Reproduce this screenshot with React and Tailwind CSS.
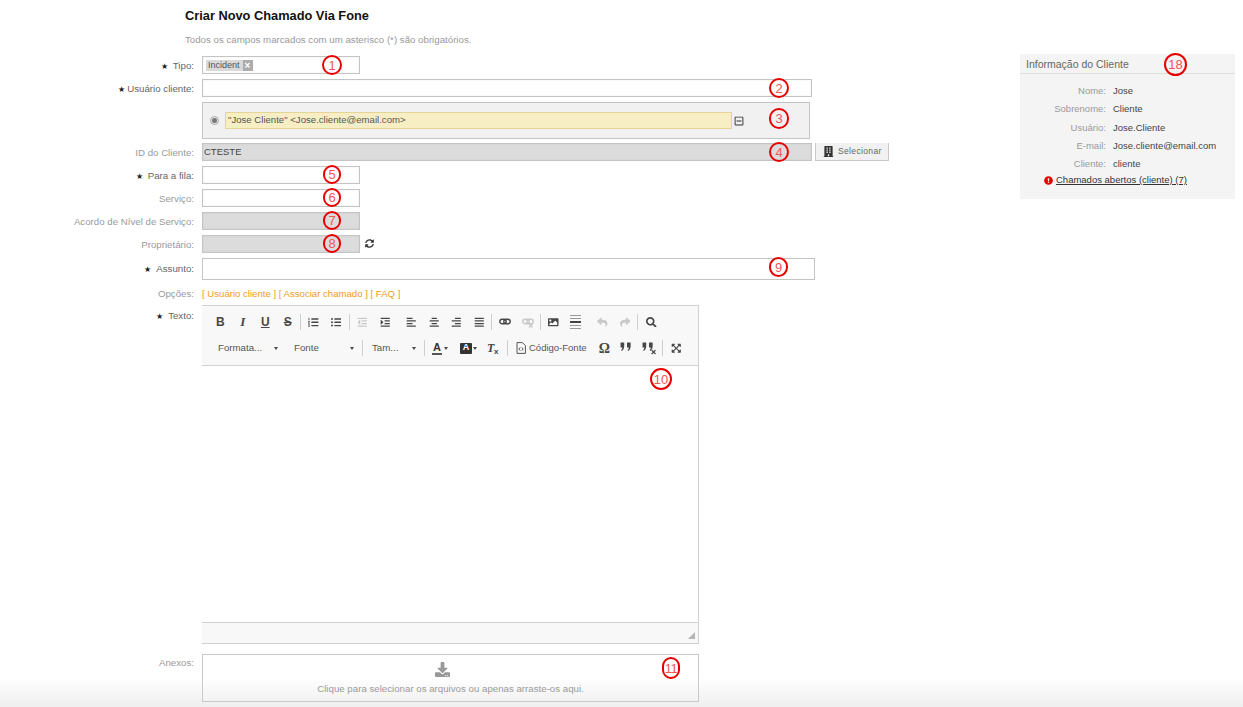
import {
  FaListOl, FaListUl, FaOutdent, FaIndent, FaAlignLeft, FaAlignCenter, FaAlignRight, FaAlignJustify,
  FaImage, FaReply, FaShare, FaSearch, FaExpandArrowsAlt, FaSyncAlt,
  FaBuilding, FaDownload, FaExclamationCircle, FaRegMinusSquare,
} from 'react-icons/fa';

const Mark = ({ n, className = '' }) => (
  <span className={`absolute flex items-center justify-center rounded-full border-2 border-[#e80000] text-[13px] leading-none text-[#f25555] ${className}`}>
    {n}
  </span>
);

const Label = ({ text, required, tight, className = 'pt-[4px]' }) => (
  <div className={`w-[194px] shrink-0 text-right text-[9.7px] leading-[12px] text-[#9a9a9a] ${className}`}>
    {required && <span className={`text-[8px] text-[#222] ${tight ? 'mr-[2px]' : 'mr-[5px]'}`}>★</span>}
    <span className={required ? 'text-[#666]' : ''}>{text}:</span>
  </div>
);

const Row = ({ label, required, tight, labelClass, className = '', children }) => (
  <div className={`flex gap-2 ${className}`}>
    <Label text={label} required={required} tight={tight} className={labelClass} />
    {children}
  </div>
);

const boxClass = 'relative h-[18px] border border-[#c4c4c4] shadow-[inset_0_0_2px_rgba(0,0,0,0.08)]';

const Btn = ({ children, faded }) => (
  <span className={`flex h-[16px] w-[22.5px] shrink-0 items-center justify-center text-[10.5px] ${faded ? 'text-[#c9c9c9]' : 'text-[#474747]'}`}>
    {children}
  </span>
);

const Sep = ({ className = '' }) => <span className={`h-[16px] w-px shrink-0 bg-[#cfcfcf] ${className}`} />;

const Caret = ({ className = '' }) => (
  <span className={`h-0 w-0 shrink-0 border-x-[2.5px] border-t-[3px] border-x-transparent border-t-[#474747] ${className}`} />
);

const Combo = ({ text, width, caretLeft }) => (
  <span className={`relative flex h-[16px] shrink-0 items-center text-[9.7px] text-[#555] ${width}`}>
    {text}
    <Caret className={`absolute top-[7px] ${caretLeft}`} />
  </span>
);

const LinkIcon = ({ cross }) => (
  <svg width="12" height="11" viewBox="0 0 12 11" fill="none" stroke="currentColor">
    <rect x="0.8" y="2.2" width="6.4" height="4.6" rx="2.3" strokeWidth="1.4" />
    <rect x="4.8" y="2.2" width="6.4" height="4.6" rx="2.3" strokeWidth="1.4" />
    {cross && <path d="M7 7l3.5 3.5M10.5 7L7 10.5" strokeWidth="1.3" />}
  </svg>
);

const SourceIcon = () => (
  <svg width="10" height="12" viewBox="0 0 10 12" fill="none" stroke="#444" className="shrink-0">
    <path d="M1 .6h5.4L9.4 3.6v7.8H1z" strokeWidth="0.9" />
    <path d="M4.2 5.4L2.9 7l1.3 1.6M5.8 5.4L7.1 7 5.8 8.6" strokeWidth="0.9" />
  </svg>
);

const QuoteIcon = ({ cross }) => (
  <svg width="16" height="14" viewBox="0 0 14 13" fill="#474747" stroke="none">
    <path d="M1 1.5h3.4v3.4c0 2.2-1 3.6-2.4 4.3l-.4-.8c.7-.6 1-1.3 1-2.4H1z" />
    <path d="M7 1.5h3.4v3.4c0 2.2-1 3.6-2.4 4.3l-.4-.8c.7-.6 1-1.3 1-2.4H7z" />
    {cross && <path d="M9.5 8.5l3.5 3.5M13 8.5L9.5 12" stroke="#474747" strokeWidth="1.2" />}
  </svg>
);

const InfoRow = ({ k, v, className = '' }) => (
  <div className={`flex gap-[7px] text-[9.5px] leading-[12px] ${className}`}>
    <span className="w-[86px] text-right text-[#9a9a9a]">{k}:</span>
    <span className="text-[#444]">{v}</span>
  </div>
);

const App = () => (
  <div className="h-[707px] w-[1243px] overflow-hidden bg-[linear-gradient(to_bottom,#ffffff_calc(100%-30px),#efefef)] font-['Liberation_Sans',Arial,sans-serif]">
    <div className="flex">
      <div className="w-[1020px] shrink-0">
        <h1 className="pl-[185px] pt-[9px] text-[12.8px] font-bold leading-[14px] text-[#111]">Criar Novo Chamado Via Fone</h1>
        <p className="mt-[11px] pl-[185px] text-[9.7px] leading-[12px] text-[#9a9a9a]">
          Todos os campos marcados com um asterisco (*) são obrigatórios.
        </p>

        <Row label="Tipo" required className="mt-[10px]">
          <div className={`${boxClass} w-[158px] bg-white`}>
            <span className="absolute left-[3px] top-[3px] flex h-[11px] items-center bg-[#d9d9d9] text-[9px] text-[#555]">
              <span className="px-[2px]">Incident</span>
              <span className="ml-[1px] flex h-[11px] w-[10px] items-center justify-center bg-[#ababab] text-[10px] font-bold leading-none text-white">×</span>
            </span>
            <Mark n="1" className="left-[119px] top-[-2px] h-[20px] w-[20px]" />
          </div>
        </Row>

        <Row label="Usuário cliente" required tight className="mt-[5px]">
          <div className={`${boxClass} w-[610px] bg-white`}>
            <Mark n="2" className="left-[566px] top-[-2px] h-[20px] w-[20px]" />
          </div>
        </Row>

        <div className="relative ml-[202px] mt-[5px] flex h-[37px] w-[608px] items-center border border-[#c4c4c4] bg-[#f1f1f1] pl-[7px]">
          <span className="flex h-[9px] w-[9px] items-center justify-center rounded-full border border-[#aaa] bg-[#e5e5e5]">
            <span className="h-[5px] w-[5px] rounded-full bg-[#777]" />
          </span>
          <div className="ml-[6px] flex h-[17px] w-[507px] items-center border border-[#e5d49a] bg-[#f7efc3] pl-[2px] text-[9.6px] text-[#555]">
            "Jose Cliente" &lt;Jose.cliente@email.com&gt;
          </div>
          <FaRegMinusSquare className="ml-[2px] text-[10px] text-[#333]" />
          <Mark n="3" className="left-[566px] top-[5px] h-[21px] w-[20px]" />
        </div>

        <Row label="ID do Cliente" className="mt-[4px]">
          <div className={`${boxClass} flex w-[610px] items-center bg-[#dcdcdc] pl-[1px] text-[9.5px] text-[#444]`}>
            CTESTE
            <Mark n="4" className="left-[566px] top-[-2px] h-[20px] w-[20px]" />
          </div>
          <div className="ml-[-5px] flex h-[18px] w-[74px] items-center gap-[4px] border-x border-b border-[#c9c9c9] bg-[#f1f1f1] pl-[7px] text-[8.5px] tracking-[0.35px] text-[#666]">
            <FaBuilding className="text-[11px] text-[#333]" />
            Selecionar
          </div>
        </Row>

        <Row label="Para a fila" required className="mt-[5px]">
          <div className={`${boxClass} w-[158px] bg-white`}>
            <Mark n="5" className="left-[120px] top-[-2px] h-[19px] w-[18px]" />
          </div>
        </Row>

        <Row label="Serviço" className="mt-[5px]">
          <div className={`${boxClass} w-[158px] bg-white`}>
            <Mark n="6" className="left-[120px] top-[-2px] h-[19px] w-[18px]" />
          </div>
        </Row>

        <Row label="Acordo de Nível de Serviço" className="mt-[5px]">
          <div className={`${boxClass} w-[158px] bg-[#dcdcdc]`}>
            <Mark n="7" className="left-[120px] top-[-2px] h-[19px] w-[18px]" />
          </div>
        </Row>

        <Row label="Proprietário" className="mt-[5px]">
          <div className={`${boxClass} w-[158px] bg-[#dcdcdc]`}>
            <Mark n="8" className="left-[120px] top-[-2px] h-[19px] w-[18px]" />
          </div>
          <FaSyncAlt className="ml-[-3px] mt-[4px] text-[9px] text-[#333]" />
        </Row>

        <Row label="Assunto" required labelClass="pt-[5px]" className="mt-[5px]">
          <div className="relative h-[22px] w-[613px] border border-[#c4c4c4] bg-white">
            <Mark n="9" className="left-[566px] top-[-2px] h-[20px] w-[19px]" />
          </div>
        </Row>

        <Row label="Opções" className="mt-[4px]">
          <div className="pt-[4px] text-[9.6px] leading-[12px] text-[#f39c12]">
            [ Usuário cliente ] [ Associar chamado ] [ FAQ ]
          </div>
        </Row>

        <Row label="Texto" required labelClass="pt-[5px]" className="mt-[5px]">
          <div className="relative flex h-[339px] w-[497px] flex-col border-b border-r border-t border-[#d1d1d1] bg-white">
            <div className="h-[60px] shrink-0 border-b border-[#d1d1d1] bg-[#f8f8f8]">
              <div className="flex items-center pl-[7px] pt-[8px]">
                <Btn><span className="text-[12px] font-bold">B</span></Btn>
                <Btn><span className="font-['Liberation_Serif',serif] text-[13px] font-bold italic">I</span></Btn>
                <Btn><span className="text-[12px] font-bold underline">U</span></Btn>
                <Btn><span className="text-[12px] font-bold line-through">S</span></Btn>
                <Sep className="mx-[1px]" />
                <Btn><FaListOl /></Btn>
                <Btn><FaListUl /></Btn>
                <Sep className="ml-[2px] mr-[1px]" />
                <Btn faded><FaOutdent /></Btn>
                <Btn><FaIndent /></Btn>
                <span className="w-[4px] shrink-0" />
                <Btn><FaAlignLeft /></Btn>
                <Btn><FaAlignCenter /></Btn>
                <Btn><FaAlignRight /></Btn>
                <Btn><FaAlignJustify /></Btn>
                <Sep className="ml-[1px] mr-[2px]" />
                <Btn><LinkIcon /></Btn>
                <Btn faded><LinkIcon cross /></Btn>
                <Sep className="mx-[1px]" />
                <Btn><FaImage /></Btn>
                <Btn>
                  <span className="flex w-[11px] flex-col gap-[2px]">
                    <span className="h-px bg-[#999]" />
                    <span className="h-px bg-[#999]" />
                    <span className="h-[2px] bg-[#444]" />
                    <span className="h-px bg-[#999]" />
                    <span className="h-px bg-[#999]" />
                  </span>
                </Btn>
                <span className="w-[4px] shrink-0" />
                <Btn faded><FaReply /></Btn>
                <Btn faded><FaShare /></Btn>
                <Sep className="ml-[1px] mr-[2px]" />
                <Btn><FaSearch /></Btn>
              </div>
              <div className="mt-[10px] flex items-center pl-[16px]">
                <Combo text="Formata..." width="w-[76px]" caretLeft="left-[56px]" />
                <Combo text="Fonte" width="w-[68px]" caretLeft="left-[56px]" />
                <Sep className="mr-[9px]" />
                <Combo text="Tam..." width="w-[52px]" caretLeft="left-[40px]" />
                <Sep className="mr-[7px]" />
                <span className="flex w-[28px] shrink-0 items-center">
                  <span className="border-b-2 border-[#555] px-[1px] text-[11px] font-bold leading-[12px] text-[#333]">A</span>
                  <Caret className="ml-[2px]" />
                </span>
                <span className="flex w-[27px] shrink-0 items-center">
                  <span className="flex h-[11px] w-[12px] items-center justify-center rounded-[1px] bg-[#333] text-[9px] font-bold text-white">A</span>
                  <Caret className="ml-[1px]" />
                </span>
                <span className="relative w-[20px] shrink-0 font-['Liberation_Serif',serif] text-[12px] font-bold italic leading-[12px] text-[#444]">
                  T<span className="absolute left-[7px] top-[4px] font-['Liberation_Sans',sans-serif] text-[8px] not-italic">x</span>
                </span>
                <Sep className="mr-[8px]" />
                <SourceIcon />
                <span className="ml-[3px] w-[64px] shrink-0 text-[9.5px] text-[#555]">Código-Fonte</span>
                <Btn><span className="font-['Liberation_Serif',serif] text-[14px] font-bold">Ω</span></Btn>
                <Btn><QuoteIcon /></Btn>
                <Btn><QuoteIcon cross /></Btn>
                <Sep className="ml-[1px] mr-[2px]" />
                <Btn><FaExpandArrowsAlt /></Btn>
              </div>
            </div>
            <div className="relative flex-1">
              <Mark n="10" className="left-[448px] top-[2px] h-[22px] w-[22px] text-[12px]" />
            </div>
            <div className="relative h-[21px] shrink-0 border-t border-[#d1d1d1] bg-[#f8f8f8]">
              <span className="absolute bottom-[4px] right-[3px] h-0 w-0 border-b-[7px] border-l-[7px] border-b-[#b5b5b5] border-l-transparent" />
            </div>
          </div>
        </Row>

        <Row label="Anexos" labelClass="pt-[3px]" className="mt-[10px]">
          <div className="relative flex h-[48px] w-[497px] flex-col items-center border border-[#c9c9c9] pt-[7px]">
            <FaDownload className="ml-[-16px] text-[15px] text-[#999]" />
            <span className="mt-[6px] text-[9.7px] leading-[12px] text-[#9a9a9a]">Clique para selecionar os arquivos ou apenas arraste-os aqui.</span>
            <Mark n="11" className="left-[459px] top-[2px] h-[22px] w-[18px] text-[10.5px] tracking-[-0.5px]" />
          </div>
        </Row>
      </div>

      <aside className="relative mt-[54px] h-[145px] w-[215px] shrink-0 bg-[#f4f4f4]">
        <div className="h-[20px] border-b border-[#dedede] pl-[6px] pt-[4px] text-[10.5px] leading-[12px] text-[#666]">Informação do Cliente</div>
        <Mark n="18" className="left-[144px] top-[-1px] h-[23px] w-[23px] text-[12px]" />
        <InfoRow k="Nome" v="Jose" className="mt-[11px]" />
        <InfoRow k="Sobrenome" v="Cliente" className="mt-[6px]" />
        <InfoRow k="Usuário" v="Jose.Cliente" className="mt-[7px]" />
        <InfoRow k="E-mail" v="Jose.cliente@email.com" className="mt-[6px]" />
        <InfoRow k="Cliente" v="cliente" className="mt-[6px]" />
        <div className="mt-[4px] flex items-center pl-[24px] text-[9.5px] leading-[12px] text-[#333]">
          <FaExclamationCircle className="mr-[3px] text-[9px] text-[#e60000]" />
          <span className="underline">Chamados abertos (cliente) (7)</span>
        </div>
      </aside>
    </div>
  </div>
);

export default App;
